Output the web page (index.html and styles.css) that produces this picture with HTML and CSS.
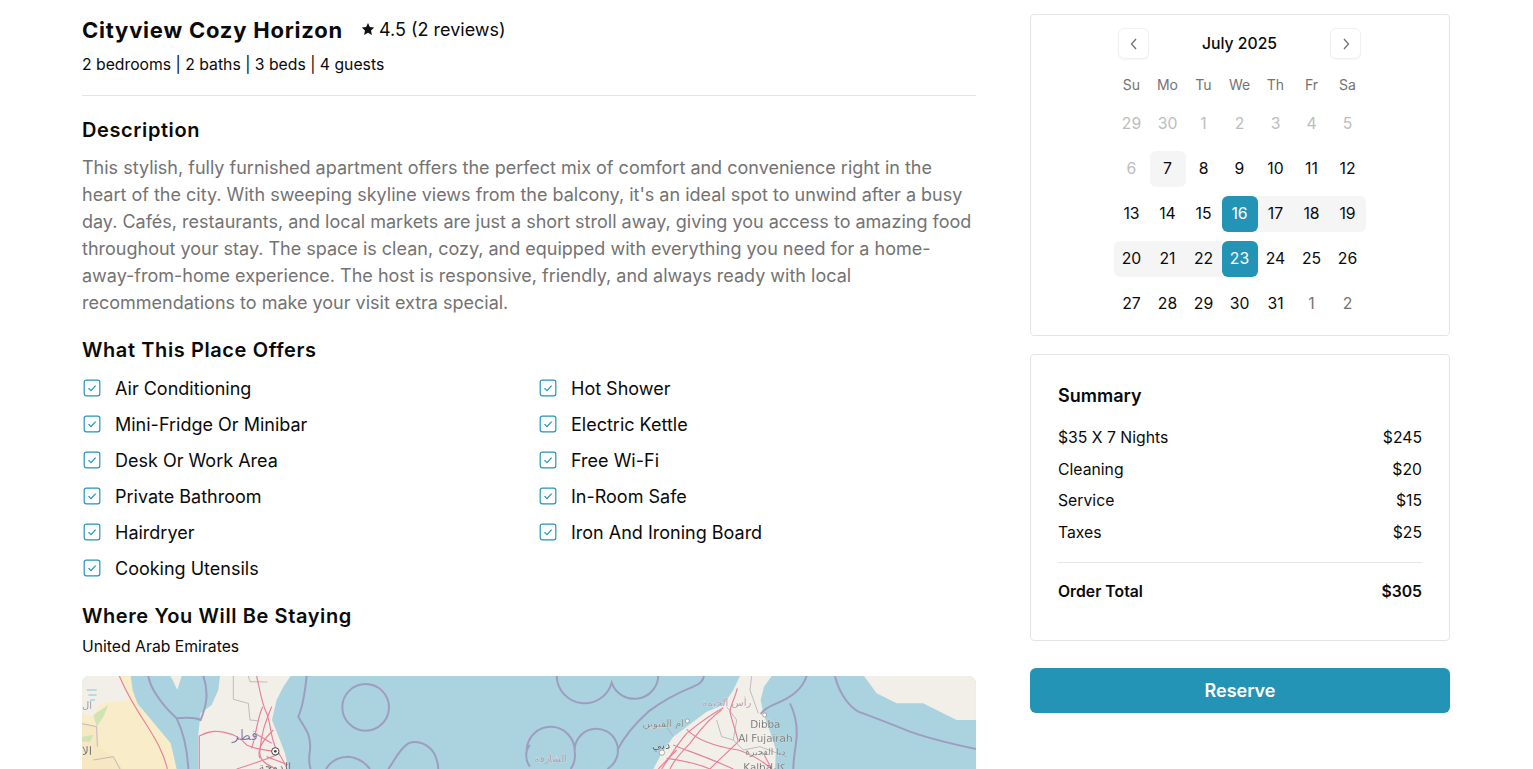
FILE: index.html
```html
<!DOCTYPE html>
<html lang="en">

<head>
  <meta charset="UTF-8">
  <meta name="viewport" content="width=device-width, initial-scale=1.0">
  <title>Cityview Cozy Horizon</title>
  <link rel="stylesheet" href="styles.css">
</head>

<body>
  <div class="page">
    <main class="details">
      <div class="titleRow">
        <h1>Cityview Cozy Horizon</h1>
        <div class="rating">
          <svg class="star" viewBox="0 0 24 24"><path d="M12 1.6l3.2 6.9 7.5.9-5.5 5.2 1.4 7.5L12 18.4l-6.6 3.7 1.4-7.5L1.3 9.4l7.5-.9z" /></svg>
          <span>4.5 (2 reviews)</span>
        </div>
      </div>
      <p class="facts">2 bedrooms | 2 baths | 3 beds | 4 guests</p>

      <h2 class="descTitle">Description</h2>
      <p class="desc">This stylish, fully furnished apartment offers the perfect mix of comfort and convenience right in the heart of the city. With sweeping skyline views from the balcony, it's an ideal spot to unwind after a busy day. Cafés, restaurants, and local markets are just a short stroll away, giving you access to amazing food throughout your stay. The space is clean, cozy, and equipped with everything you need for a home-away-from-home experience. The host is responsive, friendly, and always ready with local recommendations to make your visit extra special.</p>

      <h2 class="offerTitle">What This Place Offers</h2>
      <ul class="offers">
        <li><svg viewBox="0 0 18 18"><rect x="1.2" y="1.2" width="15.6" height="15.6" rx="2" /><path d="M5.5 9.2l2.5 2.5 4.6-5" /></svg>Air Conditioning</li>
        <li><svg viewBox="0 0 18 18"><rect x="1.2" y="1.2" width="15.6" height="15.6" rx="2" /><path d="M5.5 9.2l2.5 2.5 4.6-5" /></svg>Hot Shower</li>
        <li><svg viewBox="0 0 18 18"><rect x="1.2" y="1.2" width="15.6" height="15.6" rx="2" /><path d="M5.5 9.2l2.5 2.5 4.6-5" /></svg>Mini-Fridge Or Minibar</li>
        <li><svg viewBox="0 0 18 18"><rect x="1.2" y="1.2" width="15.6" height="15.6" rx="2" /><path d="M5.5 9.2l2.5 2.5 4.6-5" /></svg>Electric Kettle</li>
        <li><svg viewBox="0 0 18 18"><rect x="1.2" y="1.2" width="15.6" height="15.6" rx="2" /><path d="M5.5 9.2l2.5 2.5 4.6-5" /></svg>Desk Or Work Area</li>
        <li><svg viewBox="0 0 18 18"><rect x="1.2" y="1.2" width="15.6" height="15.6" rx="2" /><path d="M5.5 9.2l2.5 2.5 4.6-5" /></svg>Free Wi-Fi</li>
        <li><svg viewBox="0 0 18 18"><rect x="1.2" y="1.2" width="15.6" height="15.6" rx="2" /><path d="M5.5 9.2l2.5 2.5 4.6-5" /></svg>Private Bathroom</li>
        <li><svg viewBox="0 0 18 18"><rect x="1.2" y="1.2" width="15.6" height="15.6" rx="2" /><path d="M5.5 9.2l2.5 2.5 4.6-5" /></svg>In-Room Safe</li>
        <li><svg viewBox="0 0 18 18"><rect x="1.2" y="1.2" width="15.6" height="15.6" rx="2" /><path d="M5.5 9.2l2.5 2.5 4.6-5" /></svg>Hairdryer</li>
        <li><svg viewBox="0 0 18 18"><rect x="1.2" y="1.2" width="15.6" height="15.6" rx="2" /><path d="M5.5 9.2l2.5 2.5 4.6-5" /></svg>Iron And Ironing Board</li>
        <li><svg viewBox="0 0 18 18"><rect x="1.2" y="1.2" width="15.6" height="15.6" rx="2" /><path d="M5.5 9.2l2.5 2.5 4.6-5" /></svg>Cooking Utensils</li>
      </ul>

      <h2 class="whereTitle">Where You Will Be Staying</h2>
      <p class="place">United Arab Emirates</p>

      <div class="map">
        <svg viewBox="0 0 894 93" width="894" height="93">
          <rect width="894" height="93" fill="#aad3df" />

          <!-- west half -->
          <g transform="translate(-2,-6) scale(0.3333)">
            <path d="M0 18H152L158 60 172 100 222 160 272 220 290 297H0z" fill="#f9ecc8" />
            <path d="M0 18H118L150 90 60 100 40 140 0 130z" fill="#f2efe9" />
            <path d="M0 150L50 170 60 230 110 270 130 297H0z" fill="#f7e8c4" />
            <path d="M40 135L85 105 70 140 50 170z" fill="#cfe3b4" />
            <path d="M6 200L40 195 30 215 6 215z" fill="#cfe3b4" />
            <path d="M20 60H50M25 75H50M30 90H45" class="lake" />
            <path d="M270 18H305L292 60 278 30z" fill="#f2efe9" />
            <path d="M420 18H632L610 50 590 90 576 150 600 210 615 250 625 297H355L355 190 362 130 395 105 415 60z" fill="#f2efe9" />
            <g class="sea">
              <path d="M205 18C210 50 240 100 290 145 312 190 322 240 325 297" />
              <path d="M290 145C320 142 345 142 362 150 378 110 388 70 370 18" />
              <path d="M680 18C675 70 668 110 655 140 670 170 695 190 690 240 686 265 688 285 692 297" />
              <circle cx="857" cy="112" r="70" />
              <path d="M738 297C755 270 780 260 805 260 835 262 855 278 870 297" />
              <path d="M925 297C945 270 955 240 985 220 1015 208 1050 225 1065 255 1073 275 1075 285 1075 297" />
              <path d="M1350 225C1335 240 1335 270 1350 290" />
            </g>
            <g class="border">
              <path d="M460 18V88L505 100 510 150 532 152" />
              <path d="M505 18L510 35 562 36" />
              <path d="M40 270L100 260 120 297" />
              <path d="M0 160L50 170 52 230" />
            </g>
            <g class="road">
              <path d="M118 18C140 70 170 120 200 165 225 205 250 245 262 297" />
              <path d="M530 18C540 60 545 100 560 130 575 170 570 200 590 240 600 255 610 270 622 297" />
              <path d="M358 297V198C375 190 395 180 420 185 450 190 475 195 500 225 530 240 560 240 590 245" />
              <path d="M548 110C530 150 530 190 515 235M575 110C560 150 545 180 540 240 535 270 560 285 590 297" />
              <path d="M580 180C545 215 530 240 540 265M600 250C560 270 520 280 470 297M560 260L625 285M525 190L575 220" />
            </g>
            <circle class="cityDot" cx="586" cy="244" r="11" />
            <circle cx="586" cy="244" r="4" fill="#444" />
            <text x="495" y="210" font-size="42" fill="#6b5f92" text-anchor="middle" direction="rtl">قطر</text>
            <text x="585" y="302" font-size="36" fill="#555" text-anchor="middle" direction="rtl">الدوحة</text>
            <text x="6" y="118" font-size="30" fill="#777">ال</text>
            <text x="6" y="256" font-size="36" fill="#555">الا</text>
          </g>

          <!-- east half -->
          <g transform="translate(448,-6) scale(0.3333)">
            <path d="M370 297L395 250 430 200 470 170 530 125 580 105 610 60 630 18H725L702 50 692 90 700 130 722 190 738 240 735 297z" fill="#f2efe9" />
            <path d="M1002 18H1338V150L1280 150 1200 110 1180 100 1100 100 1040 70z" fill="#f2efe9" />
            <g class="sea">
              <path d="M80 18A84 84 0 0 0 245 38A72 72 0 0 0 385 18" />
              <path d="M-10 240A72 72 0 0 1 134 245A65 65 0 1 1 232 297" />
              <path d="M134 245A70 70 0 0 1 122 297" />
              <path d="M262 240C280 205 310 165 355 125 395 95 440 70 490 50 510 42 520 30 522 18" />
              <path d="M830 18C820 50 790 80 740 100 715 110 700 120 692 132" />
              <path d="M780 100C795 130 805 170 798 220 792 260 790 280 790 297" />
              <path d="M915 18C925 60 950 105 985 125 1040 145 1090 165 1140 185 1210 210 1280 225 1338 237" />
            </g>
            <g class="border">
              <path d="M665 18L660 60 685 130" />
              <path d="M560 150L575 200 610 210 640 240 690 230 770 260" />
              <path d="M590 110L620 150 610 210" />
              <path d="M430 200L395 150" />
            </g>
            <g class="road">
              <path d="M580 113C540 135 500 165 470 190 440 225 420 260 395 297" />
              <path d="M575 120C530 150 500 195 480 220 450 250 430 275 420 297" />
              <path d="M622 55C615 85 600 110 600 125 605 150 615 175 625 215" />
              <path d="M470 178C500 210 560 230 625 240 670 255 700 275 725 297" />
              <path d="M430 225C480 245 540 265 610 297M410 265C450 270 500 280 540 297M440 240L385 297" />
              <path d="M625 215C590 250 560 275 540 297M700 250L725 297" />
            </g>
            <circle class="townDot" cx="472" cy="153" r="6" />
            <circle class="townDot" cx="704" cy="135" r="6" />
            <circle class="townDot" cx="396" cy="248" r="8" />
            <text x="590" y="108" font-size="30" fill="#a87c92" text-anchor="middle" direction="rtl">رأس الخيمة</text>
            <text x="400" y="172" font-size="30" fill="#666" text-anchor="middle" direction="rtl">أم القيوين</text>
            <text x="393" y="238" font-size="36" fill="#444" text-anchor="middle" direction="rtl">دبي</text>
            <text x="62" y="276" font-size="30" fill="#a07c8c" text-anchor="middle" direction="rtl">الشارقة</text>
            <text x="706" y="175" font-size="31" fill="#555" text-anchor="middle">Dibba</text>
            <text x="706" y="215" font-size="31" fill="#555" text-anchor="middle">Al Fujairah</text>
            <text x="706" y="256" font-size="27" fill="#555" text-anchor="middle" direction="rtl">دبا الفجيرة</text>
            <text x="640" y="302" font-size="31" fill="#555">Kalba</text>
            <text x="765" y="302" font-size="31" fill="#555" direction="rtl">كلبا</text>
          </g>
        </svg>
      </div>
    </main>

    <aside class="side">
      <section class="card calendar">
        <div class="calHead">
          <button class="navBtn"><svg viewBox="0 0 16 16"><path d="M10 3L5.5 8l4.5 5" /></svg></button>
          <span class="month">July 2025</span>
          <button class="navBtn"><svg viewBox="0 0 16 16"><path d="M6 3l4.5 5L6 13" /></svg></button>
        </div>
        <div class="weekdays">
          <span>Su</span><span>Mo</span><span>Tu</span><span>We</span><span>Th</span><span>Fr</span><span>Sa</span>
        </div>
        <div class="days">
          <span class="off">29</span><span class="off">30</span><span class="off">1</span><span class="off">2</span><span class="off">3</span><span class="off">4</span><span class="off">5</span>
          <span class="off">6</span><span class="today">7</span><span>8</span><span>9</span><span>10</span><span>11</span><span>12</span>
          <span>13</span><span>14</span><span>15</span><span class="picked">16</span><span class="range">17</span><span class="range">18</span><span class="range rangeEnd">19</span>
          <span class="range rangeStart">20</span><span class="range">21</span><span class="range">22</span><span class="picked">23</span><span>24</span><span>25</span><span>26</span>
          <span>27</span><span>28</span><span>29</span><span>30</span><span>31</span><span class="next">1</span><span class="next">2</span>
        </div>
      </section>

      <section class="card summary">
        <h3>Summary</h3>
        <div class="line"><span>$35 X 7 Nights</span><span>$245</span></div>
        <div class="line"><span>Cleaning</span><span>$20</span></div>
        <div class="line"><span>Service</span><span>$15</span></div>
        <div class="line"><span>Taxes</span><span>$25</span></div>
        <div class="total"><span>Order Total</span><span>$305</span></div>
      </section>

      <button class="reserve">Reserve</button>
    </aside>
  </div>
</body>

</html>
```

FILE: styles.css
```css
:root {
  --teal: #2494b6;
  --text: #0a0a0a;
  --muted: #737373;
  --line: #e5e5e5;
}

* {
  box-sizing: border-box;
}

html,
body {
  height: 769px;
  overflow: hidden;
}

body {
  margin: 0;
  color: var(--text);
  background-color: #fff;
  font-family: Inter, "Liberation Sans", sans-serif;
}

h1,
h2,
h3,
p,
ul {
  margin: 0;
  padding: 0;
}

.page {
  display: flex;
  gap: 54px;
  padding: 14px 83px 0 82px;
}

.details {
  width: 894px;
  flex-shrink: 0;
}

.titleRow {
  display: flex;
  align-items: center;
  gap: 18px;
  height: 32px;
}

h1 {
  font-size: 22px;
  font-weight: 700;
  letter-spacing: 0.78px;
}

.rating {
  display: flex;
  align-items: center;
  gap: 4px;
  margin-bottom: 2px;
  font-size: 18px;
}

.star {
  width: 14px;
  height: 14px;
  fill: #111;
}

.facts {
  margin-top: 8px;
  padding-bottom: 20px;
  border-bottom: 1px solid var(--line);
  font-size: 15.75px;
  line-height: 21px;
}

h2 {
  font-size: 20px;
  font-weight: 600;
  line-height: 28px;
  letter-spacing: 0.6px;
}

.descTitle {
  margin-top: 20px;
}

.desc {
  margin-top: 10px;
  color: var(--muted);
  font-size: 18px;
  line-height: 27px;
}

.offerTitle {
  margin-top: 20px;
}

.offers {
  display: grid;
  grid-template-columns: 456px 1fr;
  margin-top: 6px;
  list-style: none;
}

.offers li {
  display: flex;
  align-items: center;
  gap: 14px;
  height: 36px;
  padding-left: 1px;
  font-size: 18px;
}

.offers svg {
  width: 18px;
  height: 18px;
  fill: none;
  stroke: var(--teal);
  stroke-width: 1.2;
}

.whereTitle {
  margin-top: 16px;
}

.place {
  margin-top: 5px;
  font-size: 15.75px;
  line-height: 24px;
}

.map {
  height: 320px;
  margin-top: 17px;
  overflow: hidden;
  border-radius: 8px;
  background-color: #aad3df;
}

.map svg {
  display: block;
  filter: blur(0.35px);
}

.map text {
  font-family: "DejaVu Sans", "Noto Sans", sans-serif;
  stroke: #ffffff99;
  stroke-width: 1;
}

.sea path,
.sea circle {
  fill: none;
  stroke: #9f9dbf;
  stroke-width: 6;
}

.border path {
  fill: none;
  stroke: #b5b0b8;
  stroke-width: 2.5;
}

.road path {
  fill: none;
  stroke: #e8809a;
  stroke-width: 3.5;
}

.lake {
  fill: none;
  stroke: #aad3df;
  stroke-width: 4;
}

.cityDot {
  fill: #fff;
  stroke: #444;
  stroke-width: 3;
}

.townDot {
  fill: #fff;
  stroke: #888;
  stroke-width: 2;
}

.side {
  width: 420px;
  flex-shrink: 0;
}

.card {
  border: 1px solid var(--line);
  border-radius: 4px;
}

.calendar {
  height: 322px;
  padding: 13px 83px 0;
}

.calHead {
  display: flex;
  align-items: center;
  justify-content: space-between;
  height: 31px;
  margin: 0 5px 0 4px;
}

.navBtn {
  display: flex;
  align-items: center;
  justify-content: center;
  width: 31px;
  height: 31px;
  padding: 0;
  border: 1px solid #f0f0f0;
  border-radius: 6px;
  background-color: #fff;
  box-shadow: 0 1px 2px #0000000a;
}

.navBtn svg {
  width: 16px;
  height: 16px;
  fill: none;
  stroke: var(--muted);
  stroke-width: 1.3;
}

.month {
  font-size: 15.75px;
  font-weight: 500;
}

.weekdays,
.days {
  display: grid;
  grid-template-columns: repeat(7, 36px);
  text-align: center;
}

.weekdays {
  margin-top: 15px;
  color: var(--muted);
  font-size: 14px;
  line-height: 22px;
}

.weekdays span {
  padding-right: 1px;
}

.days {
  margin-top: 10px;
  row-gap: 9px;
  font-size: 15.75px;
}

.days span {
  height: 36px;
  padding-right: 1px;
  line-height: 36px;
  border-radius: 6px;
}

.days .off {
  color: #bdbdbd;
}

.days .next {
  color: var(--muted);
}

.days .today,
.days .range {
  background-color: #f5f5f5;
}

.days .range {
  border-radius: 0;
}

.days .rangeEnd {
  border-radius: 0 6px 6px 0;
}

.days .rangeStart {
  border-radius: 6px 0 0 6px;
}

.days .picked {
  color: #fff;
  background-color: var(--teal);
}

.summary {
  height: 287px;
  margin-top: 18px;
  padding: 27px 27px 0;
}

.summary h3 {
  font-size: 18px;
  font-weight: 600;
  line-height: 28px;
}

.line {
  display: flex;
  justify-content: space-between;
  height: 31.6px;
  align-items: center;
  font-size: 15.75px;
}

.summary h3+.line {
  margin-top: 11.8px;
}

.total {
  display: flex;
  justify-content: space-between;
  align-items: center;
  margin-top: 14.2px;
  padding-top: 14px;
  border-top: 1px solid var(--line);
  font-size: 15.75px;
  font-weight: 600;
  line-height: 30px;
}

.reserve {
  display: block;
  width: 100%;
  height: 45px;
  margin-top: 27px;
  border: 0;
  border-radius: 6px;
  color: #fff;
  background-color: var(--teal);
  font-family: inherit;
  font-size: 18px;
  font-weight: 600;
}
```
